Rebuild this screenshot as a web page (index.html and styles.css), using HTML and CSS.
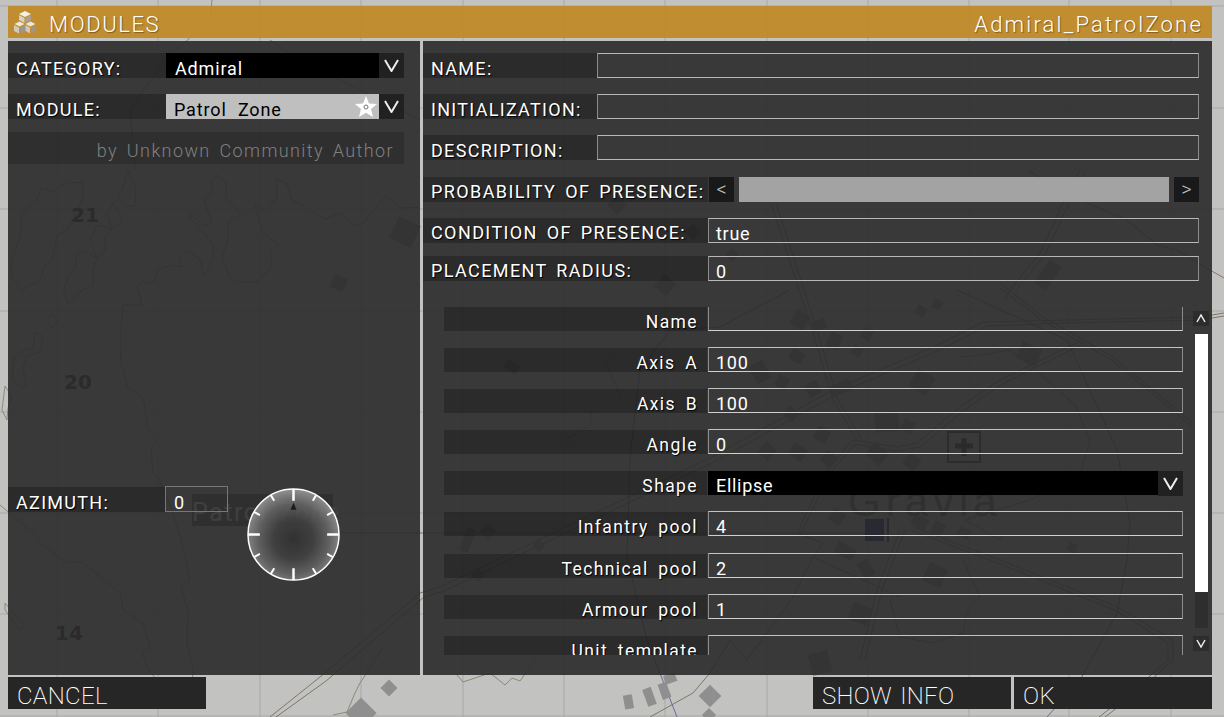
FILE: index.html
```html
<!DOCTYPE html>
<html lang="en">
<head>
    <meta charset="UTF-8">
    <title>Modules</title>
    <link rel="stylesheet" href="styles.css">
</head>
<body>
    <!-- map seen through the dialog -->
    <svg class="map" width="1224" height="717" viewBox="0 0 1224 717">
        <g class="grid">
            <path d="M57 0V717M158 0V717M260 0V717M361 0V717M463 0V717M564 0V717M665 0V717M767 0V717M868 0V717M969 0V717M1069 0V717M1171 0V717"/>
            <path d="M0 6H1224M0 108H1224M0 209H1224M0 311H1224M0 412H1224M0 513H1224M0 614H1224M0 716H1224"/>
        </g>
        <g class="contour">
            <path d="M41 188L52 192 67 182 83 183V198L68 230 57 235 53 258 43 268 42 277 35 284H30L23 292 12 277 11 260 16 250 21 230 22 213 37 200Z"/>
            <path d="M97 225L112 229 105 238V250L97 259 93 270V285L82 290 68 304 64 290 68 276 76 267V255L83 250 97 259 90 240Z"/>
            <path d="M113 203L121 217V222L112 229 107 215ZM128 170L136 187 135 206H127L118 198 123 188ZM52 313L57 322 52 328 47 320Z"/>
            <path d="M35 332L43 336 40 352 27 356 23 368 26 385 22 388 12 380 14 358 23 350 33 348ZM5 386L12 397 8 408 7 420 2 410Z"/>
            <path d="M197 709L192 687 193 670 187 643 188 613 181 585 190 580 183 547 172 510 158 477 153 472 151 450 156 441 148 427 143 397 128 388 121 363 120 343 123 305H142L137 287 142 282 153 284 158 269 173 265 182 267 179 259 189 251 200 260 204 276 214 258 213 244 188 215 190 213 204 226 212 222 204 200 212 192 211 180 218 175 226 183V198L241 214 228 222V240L222 257 230 278 238 282H257L272 267 270 250 279 245 263 233 254 203 265 212 277 198 276 179 287 184 292 200 325 219 340 213 356 226 363 223 386 195 400 208 420 207"/>
            <path d="M0 505L33 533 43 545 67 563 83 562 120 593 123 610 143 623 150 648 142 652 148 670 160 683 163 709"/>
            <path d="M5 603L25 627 20 630 5 610ZM333 715L347 712 355 693 360 683 383 648M457 675L463 682 490 673 505 685 512 678 520 681 537 657"/>
            <path d="M135 170L130 110 165 60 210 20 212 0M420 120L360 90 300 60 270 40M620 395L610 372 605 362 615 350M575 445L565 440 590 425 592 410"/>
        </g>
        <g class="contour-red">
            <path d="M1027 170L1087 203 1127 220 1157 245 1177 250 1210 270 1224 278"/>
            <path d="M958 357L980 355 1010 350 1030 365 1075 405 1090 440 1080 475 1030 500 990 512 965 520 1000 540 1003 535"/>
            <path d="M963 560L980 597 967 610 963 633 933 643 900 637 890 600"/>
        </g>
        <g class="road">
            <path d="M270 717L320 677 420 593 440 587 710 458 833 390 933 347 983 322 1067 320 1200 317 1224 313"/>
            <path d="M276 717L326 681 424 597 444 591 714 462 837 394 937 351 987 326 1067 323 1200 320 1224 316"/>
            <path d="M1077 343L1000 380 960 407 917 443 897 447 853 440 827 470 797 533 823 543 813 557 793 597 747 660 730 640 710 673 693 693 650 717"/>
            <path d="M1081 345L1002 384 963 411 920 447 897 451 855 444 830 473 801 533"/>
            <path d="M767 190L800 293 813 333 833 400 857 440M772 190L805 293 818 333 838 400 862 440"/>
            <path d="M1080 170L1063 203 1040 253 1010 290 1005 300M1086 170L1069 203 1046 253 1016 290"/>
            <path d="M1000 283L1043 317 1113 357 1193 423M1000 288L1043 321 1113 361 1193 427"/>
            <path d="M913 527L1000 560 1117 607 1173 640V660L1140 690 1105 717M913 531L1000 564 1117 611 1168 643V660L1134 690 1099 717"/>
            <path d="M900 530L877 590 860 660M905 530L882 590 865 660M813 557L900 597"/>
        </g>
        <path class="track" d="M1047 717L1080 680 1117 613 1127 560 1130 523 1117 450 1067 340 957 290M790 290L720 327 670 330 640 370 630 457 627 557 647 640 677 717M260 533H865"/>
        <g class="house">
            <rect x="393" y="220" width="24" height="24" transform="rotate(25 405 232)"/>
            <rect x="332" y="276" width="14" height="14" transform="rotate(25 339 283)"/>
            <rect x="505" y="362" width="14" height="10" transform="rotate(35 512 367)"/>
            <rect x="610" y="198" width="14" height="14" transform="rotate(45 617 205)"/>
            <rect x="687" y="226" width="12" height="12" transform="rotate(45 693 232)"/>
            <rect x="727" y="250" width="10" height="10" transform="rotate(45 732 255)"/>
            <rect x="657" y="277" width="16" height="16" transform="rotate(40 665 285)"/>
            <rect x="1034" y="268" width="28" height="14" transform="rotate(-55 1048 275)"/>
            <rect x="792" y="312" width="16" height="16" transform="rotate(30 800 320)"/>
            <rect x="812" y="320" width="14" height="10" transform="rotate(-20 819 325)"/>
            <rect x="828" y="333" width="13" height="15" transform="rotate(20 834 340)"/>
            <rect x="862" y="328" width="10" height="12" transform="rotate(30 867 334)"/>
            <rect x="852" y="346" width="10" height="10" transform="rotate(30 857 351)"/>
            <rect x="916" y="306" width="10" height="10" transform="rotate(30 921 311)"/>
            <rect x="933" y="300" width="9" height="9" transform="rotate(30 937 304)"/>
            <rect x="790" y="350" width="14" height="12" transform="rotate(30 797 356)"/>
            <rect x="912" y="372" width="20" height="20" transform="rotate(30 922 382)"/>
            <rect x="1018" y="345" width="22" height="18" transform="rotate(25 1029 354)"/>
            <rect x="752" y="362" width="16" height="20" transform="rotate(-30 760 372)"/>
            <rect x="776" y="376" width="12" height="12" transform="rotate(30 782 382)"/>
            <rect x="806" y="382" width="14" height="14" transform="rotate(-30 813 389)"/>
            <rect x="830" y="382" width="22" height="12" transform="rotate(-25 841 388)"/>
            <rect x="785" y="408" width="12" height="12" transform="rotate(40 791 414)"/>
            <rect x="815" y="428" width="14" height="14" transform="rotate(30 822 435)"/>
            <rect x="875" y="412" width="24" height="20" transform="rotate(-5 887 422)"/>
            <rect x="902" y="420" width="12" height="12" transform="rotate(30 908 426)"/>
            <rect x="760" y="444" width="14" height="14" transform="rotate(40 767 451)"/>
            <rect x="790" y="445" width="16" height="14" transform="rotate(35 798 452)"/>
            <rect x="822" y="452" width="14" height="14" transform="rotate(40 829 459)"/>
            <rect x="868" y="446" width="18" height="16" transform="rotate(40 877 454)"/>
            <rect x="905" y="455" width="14" height="14" transform="rotate(40 912 462)"/>
            <rect x="830" y="510" width="14" height="14" transform="rotate(40 837 517)"/>
            <rect x="912" y="516" width="16" height="12" transform="rotate(30 920 522)"/>
            <rect x="932" y="522" width="12" height="14" transform="rotate(30 938 529)"/>
            <rect x="958" y="528" width="12" height="10" transform="rotate(30 964 533)"/>
            <rect x="835" y="545" width="20" height="12" transform="rotate(30 845 551)"/>
            <rect x="860" y="560" width="12" height="18" transform="rotate(-30 866 569)"/>
            <rect x="925" y="565" width="20" height="20" transform="rotate(25 935 575)"/>
            <rect x="1068" y="543" width="9" height="9" transform="rotate(25 1072 547)"/>
            <rect x="850" y="605" width="20" height="18" transform="rotate(20 860 614)"/>
            <rect x="810" y="652" width="20" height="22" transform="rotate(-15 820 663)"/>
            <rect x="482" y="525" width="12" height="12" transform="rotate(45 488 531)"/>
            <rect x="463" y="528" width="9" height="24" transform="rotate(20 467 540)"/>
            <rect x="535" y="541" width="9" height="9" transform="rotate(45 539 545)"/>
            <rect x="473" y="570" width="10" height="10" transform="rotate(45 478 575)"/>
            <rect x="383" y="682" width="12" height="12" transform="rotate(45 389 688)"/>
            <rect x="350" y="702" width="22" height="22" transform="rotate(45 361 713)"/>
            <rect x="624" y="695" width="9" height="14" transform="rotate(-10 628 702)"/>
            <rect x="645" y="688" width="9" height="18" transform="rotate(-20 649 697)"/>
            <rect x="660" y="683" width="9" height="16" transform="rotate(-20 664 691)"/>
            <rect x="664" y="674" width="12" height="9" transform="rotate(-20 670 678)"/>
            <rect x="702" y="688" width="16" height="16" transform="rotate(45 710 696)"/>
            <rect x="704" y="710" width="10" height="10" transform="rotate(45 709 715)"/>
            <rect x="1088" y="688" width="14" height="14" transform="rotate(40 1095 695)"/>
        </g>
        <text class="grid-num" x="71" y="222">21</text>
        <text class="grid-num" x="64" y="389">20</text>
        <text class="grid-num" x="55" y="640">14</text>
        <text class="town" x="848" y="516">Gravia</text>
        <path class="plus" d="M948 432h32v30h-32z"/>
        <path class="plus-cross" d="M964 438v18M955 446h18"/>
        <path class="flag" d="M865 519h19v22h-19zM887 518h2v24h-2z"/>
        <rect class="marker-bg" x="192" y="494" width="141" height="32"/>
        <text class="marker-text" x="192" y="521">Patrol Zone</text>
    </svg>

    <div class="window">
        <div class="title-bar">
            <div class="title-left">
                <svg class="cubes" width="24" height="24" viewBox="0 0 24 24">
                    <path fill="#f4f0e6" d="M12 1l6 3-6 3-6-3z"/>
                    <path fill="#d8d2c4" d="M6 5l5.500 3v5L6 10z"/>
                    <path fill="#a9a294" d="M18 5l-5.500 3v5l5.500-3z"/>
                    <path fill="#ece7da" d="M6.500 11.500l5 2.500-5 2.500-5-2.500z"/>
                    <path fill="#cfc9ba" d="M1 15l5 2.500v6L1 21z"/>
                    <path fill="#9d9688" d="M12 15l-5 2.500v6L12 21z"/>
                    <path fill="#ece7da" d="M17.500 11.500l5 2.500-5 2.500-5-2.500z"/>
                    <path fill="#cfc9ba" d="M12.500 15l4.500 2.500v6L12.500 21z"/>
                    <path fill="#9d9688" d="M23 15l-5 2.500v6L23 21z"/>
                </svg>
                <span class="title-text title-main">MODULES</span>
            </div>
            <span class="title-text">Admiral_PatrolZone</span>
        </div>

        <div class="panels">
            <div class="panel-left">
                <div class="row">
                    <div class="label side-label">CATEGORY:</div>
                    <div class="combo combo-dark">Admiral</div>
                    <div class="arrow">
                        <svg class="chevron" width="15" height="13" viewBox="0 0 15 13"><path d="M1 1L7.500 12 14 1"/></svg>
                    </div>
                </div>
                <div class="row">
                    <div class="label side-label">MODULE:</div>
                    <div class="combo combo-light">
                        Patrol Zone
                        <svg class="star" width="22" height="22" viewBox="0 0 22 22">
                            <path fill="#fff" d="M11 0l3 7.500 8 .5-6 5 2 8-7-4.300L4 21l2-8-6-5 8-.5z"/>
                            <circle cx="11" cy="11" r="2" fill="none" stroke="#777" stroke-width="1"/>
                        </svg>
                    </div>
                    <div class="arrow">
                        <svg class="chevron" width="15" height="13" viewBox="0 0 15 13"><path d="M1 1L7.500 12 14 1"/></svg>
                    </div>
                </div>
                <div class="author">by Unknown Community Author</div>
                <div class="row azimuth-row">
                    <div class="label side-label">AZIMUTH:</div>
                    <div class="azimuth-input">0</div>
                    <svg class="compass" width="93" height="93" viewBox="0 0 94 94">
                        <defs>
                            <radialGradient id="dial" cy="0.55" r="0.55">
                                <stop offset="0" stop-color="#303030"/>
                                <stop offset="0.4" stop-color="#414141"/>
                                <stop offset="0.7" stop-color="#666"/>
                                <stop offset="1" stop-color="#a0a0a0"/>
                            </radialGradient>
                        </defs>
                        <circle class="dial" cx="47" cy="47" r="46" fill="url(#dial)"/>
                        <path class="tick-major" d="M47 1V13M47 81V93M1 47H13M81 47H93"/>
                        <path class="tick-minor" d="M24 7L27.500 13M70 7L66.500 13M7 24L13 27.500M87 24L81 27.500M7 70L13 66.500M87 70L81 66.500M24 87L27.500 81M70 87L66.500 81"/>
                        <path fill="#1c1c1c" d="M47 15l3 7h-6z"/>
                    </svg>
                </div>
            </div>

            <div class="panel-right">
                <div class="row row-name">
                    <div class="label wide-label">NAME:</div>
                    <div class="field field-main"></div>
                </div>
                <div class="row row-name">
                    <div class="label wide-label">INITIALIZATION:</div>
                    <div class="field field-main"></div>
                </div>
                <div class="row row-name">
                    <div class="label wide-label">DESCRIPTION:</div>
                    <div class="field field-main"></div>
                </div>
                <div class="row row-wide row-prob">
                    <div class="label long-label">PROBABILITY OF PRESENCE:</div>
                    <div class="slider-btn">&lt;</div>
                    <div class="slider-bar"></div>
                    <div class="slider-btn">&gt;</div>
                </div>
                <div class="row row-wide">
                    <div class="label long-label">CONDITION OF PRESENCE:</div>
                    <div class="field">true</div>
                </div>
                <div class="row row-placement">
                    <div class="label long-label">PLACEMENT RADIUS:</div>
                    <div class="field">0</div>
                </div>

                <div class="attrs">
                    <div class="attr-list">
                        <div class="attr"><div class="attr-label">Name</div><div class="attr-field"></div></div>
                        <div class="attr"><div class="attr-label">Axis A</div><div class="attr-field">100</div></div>
                        <div class="attr"><div class="attr-label">Axis B</div><div class="attr-field">100</div></div>
                        <div class="attr"><div class="attr-label">Angle</div><div class="attr-field">0</div></div>
                        <div class="attr">
                            <div class="attr-label">Shape</div>
                            <div class="attr-combo">Ellipse</div>
                            <div class="arrow attr-arrow">
                                <svg class="chevron" width="15" height="13" viewBox="0 0 15 13"><path d="M1 1L7.500 12 14 1"/></svg>
                            </div>
                        </div>
                        <div class="attr"><div class="attr-label">Infantry pool</div><div class="attr-field">4</div></div>
                        <div class="attr"><div class="attr-label">Technical pool</div><div class="attr-field">2</div></div>
                        <div class="attr"><div class="attr-label">Armour pool</div><div class="attr-field">1</div></div>
                        <div class="attr"><div class="attr-label">Unit template</div><div class="attr-field"></div></div>
                    </div>
                    <div class="scrollbar">
                        <div class="scroll-btn">
                            <svg class="chevron-small" width="10" height="9" viewBox="0 0 10 9"><path d="M1 8L5 1 9 8"/></svg>
                        </div>
                        <div class="scroll-track"><div class="scroll-thumb"></div></div>
                        <div class="scroll-btn">
                            <svg class="chevron-small" width="10" height="9" viewBox="0 0 10 9"><path d="M1 1L5 8 9 1"/></svg>
                        </div>
                    </div>
                </div>
            </div>
        </div>

        <div class="footer">
            <div class="foot-btn">CANCEL</div>
            <div class="foot-right">
                <div class="foot-btn">SHOW INFO</div>
                <div class="foot-btn">OK</div>
            </div>
        </div>
    </div>
</body>
</html>
```

FILE: styles.css
```css
html, body {
    margin: 0;
    padding: 0;
}

body {
    position: relative;
    width: 1224px;
    height: 717px;
    overflow: hidden;
    background-color: #c2c2c0;
    font-family: "Roboto", "Liberation Sans", sans-serif;
    color: #fff;
}

.map {
    position: absolute;
    left: 0;
    top: 0;
}

.grid path, .contour path, .contour-red path, .road path, .track, .plus, .plus-cross {
    fill: none;
}

.grid path {
    stroke: #a8a8a8;
    stroke-width: 1;
}

.contour path {
    stroke: #8f8878;
    stroke-width: 1;
}

.contour-red path {
    stroke: #96706c;
    stroke-width: 1;
}

.road path {
    stroke: #7d7766;
    stroke-width: 1;
}

.track {
    stroke: #6a6c95;
    stroke-width: 1;
}

.house rect {
    fill: #8f8f8f;
}

.grid-num {
    font-family: "DejaVu Sans", sans-serif;
    font-size: 20px;
    font-weight: bold;
    fill: #333;
}

.town {
    font-family: "Liberation Sans", sans-serif;
    font-size: 42px;
    letter-spacing: 5px;
    fill: #666;
}

.plus {
    stroke: #444;
    stroke-width: 2;
}

.plus-cross {
    stroke: #333;
    stroke-width: 5;
}

.flag {
    fill: #20207a;
}

.marker-bg {
    fill: #000;
    fill-opacity: 0.5;
}

.marker-text {
    font-size: 25px;
    letter-spacing: 1.5px;
    word-spacing: 4px;
    fill: #fff;
}

.window {
    position: relative;
    width: 1204px;
    margin-left: 8px;
    padding-top: 6px;
}

.title-bar {
    display: flex;
    justify-content: space-between;
    align-items: center;
    height: 32px;
    margin-bottom: 3px;
    padding-right: 9px;
    background-color: rgba(192, 138, 42, 0.96);
}

.title-left {
    display: flex;
    align-items: center;
    gap: 12px;
    padding-left: 5px;
}

.title-text {
    padding-top: 4px;
    font-size: 22px;
    font-weight: 300;
    letter-spacing: 2.2px;
    text-shadow: 1px 1px 1px rgba(0, 0, 0, 0.35);
}

.title-main {
    letter-spacing: 1.6px;
}

.panels {
    display: flex;
    gap: 3px;
    height: 634px;
}

.panel-left, .panel-right {
    background-color: rgba(42, 42, 42, 0.9);
}

.panel-left {
    width: 412px;
    flex: none;
    padding-top: 12px;
    box-sizing: border-box;
}

.panel-right {
    flex: 1;
    padding-top: 12px;
    box-sizing: border-box;
}

.row {
    display: flex;
    height: 25px;
    margin-bottom: 16px;
}

.row-prob {
    margin-top: 17px;
}

.label {
    box-sizing: border-box;
    height: 25px;
    line-height: 31px;
    padding-left: 8px;
    font-size: 18px;
    letter-spacing: 1.3px;
    word-spacing: 3px;
    white-space: nowrap;
    background-color: rgba(0, 0, 0, 0.24);
    text-shadow: 1px 1px 1px #000;
}

.side-label {
    width: 158px;
}

.wide-label {
    width: 174px;
}

.long-label {
    width: 285px;
    line-height: 29px;
    letter-spacing: 1.4px;
}

.combo {
    position: relative;
    width: 213px;
    box-sizing: border-box;
    padding-left: 9px;
    line-height: 31px;
    font-size: 18px;
    letter-spacing: 0.85px;
    word-spacing: 6px;
}

.combo-dark {
    background-color: #000;
}

.combo-light {
    background-color: #bfbfbf;
    color: #000;
    padding-left: 8px;
}

.star {
    position: absolute;
    right: 2px;
    top: 2px;
}

.arrow {
    display: flex;
    justify-content: center;
    padding-top: 6px;
    box-sizing: border-box;
    width: 25px;
    height: 25px;
    background-color: rgba(0, 0, 0, 0.42);
}

.chevron path, .chevron-small path {
    fill: none;
    stroke: #eee;
}

.chevron path {
    stroke-width: 2;
}

.chevron-small path {
    stroke-width: 1.500;
}

.author {
    height: 32px;
    margin-top: -3px;
    box-sizing: border-box;
    width: 396px;
    padding-right: 10px;
    line-height: 38px;
    text-align: right;
    font-size: 18px;
    font-weight: 300;
    letter-spacing: 1.4px;
    word-spacing: 3px;
    color: #808080;
    background-color: rgba(0, 0, 0, 0.17);
}

.azimuth-row {
    position: relative;
    margin-top: 323px;
}

.azimuth-input {
    width: 63px;
    height: 26px;
    margin: -1px 0 0 -1px;
    box-sizing: border-box;
    padding-left: 8px;
    line-height: 32px;
    font-size: 18px;
    border: 1px solid #777;
}

.compass {
    position: absolute;
    left: 239px;
    top: 1px;
}

.dial {
    fill-opacity: 0.85;
    stroke: #fff;
    stroke-width: 1.500;
}

.tick-major {
    fill: none;
    stroke: #fff;
    stroke-width: 2.500;
}

.tick-minor {
    fill: none;
    stroke: #fff;
    stroke-width: 2;
}

.row-name .field-main {
    flex: none;
    width: 602px;
}

.row-placement {
    margin-top: -3px;
}

.field, .attr-field {
    box-sizing: border-box;
    height: 25px;
    padding-left: 7px;
    line-height: 29px;
    font-size: 18px;
    letter-spacing: 0.7px;
    border: 1px solid #8c8c8c;
    border-top-color: #b8b8b8;
    border-bottom-color: #b8b8b8;
}

.field {
    width: 491px;
}

.slider-btn {
    width: 25px;
    height: 25px;
    margin-left: 1px;
    line-height: 24px;
    text-align: center;
    font-size: 20px;
    font-weight: 300;
    color: #c4c4c4;
    background-color: #191919;
}

.slider-bar {
    width: 430px;
    margin: 0 4px 0 5px;
    background-color: #a3a3a3;
}

.attrs {
    display: flex;
    height: 348px;
    margin-top: 26px;
}

.attr-list {
    width: 760px;
    height: 348px;
    padding-left: 21px;
    box-sizing: border-box;
    overflow: hidden;
}

.attr {
    display: flex;
    height: 25px;
    margin-bottom: 16.1px;
}

.attr:first-child {
    margin-top: -1px;
}

.attr:first-child .attr-field {
    border-top-color: transparent;
}

.attr-label {
    width: 263px;
    margin-top: 1px;
    box-sizing: border-box;
    padding-right: 9px;
    line-height: 31px;
    text-align: right;
    font-size: 17.5px;
    letter-spacing: 1.4px;
    word-spacing: 4px;
    white-space: nowrap;
    background-color: rgba(0, 0, 0, 0.24);
    text-shadow: 1px 1px 1px #000;
}

.attr-field {
    width: 475px;
    margin-left: 1px;
    line-height: 30px;
    border-bottom-color: #d0d0d0;
    border-top-color: #c4c4c4;
}

.attr-combo {
    width: 450px;
    margin: 1px 0 0 1px;
    box-sizing: border-box;
    padding-left: 8px;
    line-height: 30px;
    font-size: 18px;
    letter-spacing: 0.7px;
    background-color: #000;
}

.attr-arrow {
    margin-top: 1px;
}

.scrollbar {
    display: flex;
    flex-direction: column;
    align-items: center;
    width: 16px;
    margin-left: 10px;
    padding-top: 4px;
    box-sizing: border-box;
}

.scroll-btn {
    display: flex;
    justify-content: center;
    align-items: center;
    width: 16px;
    height: 15px;
    background-color: rgba(0, 0, 0, 0.2);
}

.scroll-track {
    width: 13px;
    height: 294px;
    margin: 8px 0;
    background-color: #2e2e2e;
}

.scroll-thumb {
    height: 258px;
    background-color: #fff;
}

.footer {
    display: flex;
    justify-content: space-between;
    margin-top: 2px;
}

.foot-right {
    display: flex;
    gap: 3px;
}

.foot-btn {
    width: 198px;
    height: 32px;
    box-sizing: border-box;
    padding-left: 9px;
    line-height: 38px;
    font-size: 24px;
    font-weight: 200;
    letter-spacing: 0.3px;
    word-spacing: 2px;
    background-color: #262626;
}
```
